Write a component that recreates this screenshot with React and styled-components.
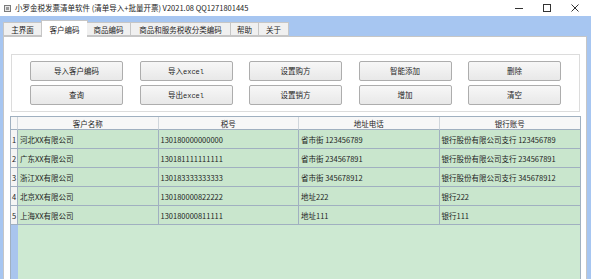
import React from 'react'
import styled, { createGlobalStyle } from 'styled-components'

const GlobalStyle = createGlobalStyle`
  html, body {
    margin: 0;
    padding: 0;
    width: 591px;
    height: 279px;
    overflow: hidden;
    background: #ffffff;
  }
  * { box-sizing: border-box; }
`

const Window = styled.div`
  width: 591px;
  height: 279px;
  display: flex;
  flex-direction: column;
  font-family: "Noto Sans CJK SC", "Noto Sans", sans-serif;
  color: #1e1e1e;
`

const TitleBar = styled.div`
  height: 16px;
  flex: none;
  display: flex;
  align-items: center;
  background: #ffffff;
  padding-left: 4px;
`

const AppIcon = styled.svg`
  width: 7px;
  height: 7px;
  margin-right: 4px;
`

const Title = styled.div`
  font-size: 7.5px;
  line-height: 16px;
  white-space: nowrap;
  color: #222;
`

const Controls = styled.div`
  margin-left: auto;
  margin-right: 2px;
  display: flex;
  align-items: center;
  height: 16px;
`

const Ctrl = styled.div`
  width: 28px;
  height: 16px;
  display: flex;
  align-items: center;
  justify-content: center;
`

const Frame = styled.div`
  flex: 1;
  min-height: 0;
  background: #a7c6f1;
  padding: 4px 4px 0 3px;
  display: flex;
  flex-direction: column;
`

const TabStrip = styled.div`
  height: 16px;
  flex: none;
  display: flex;
  align-items: flex-end;
  position: relative;
  z-index: 1;
`

const Tab = styled.div`
  width: ${p => p.$w}px;
  height: ${p => (p.$active ? 17 : 14)}px;
  margin-bottom: ${p => (p.$active ? -1 : 0)}px;
  margin-left: ${p => (p.$active ? -1 : 0)}px;
  margin-right: ${p => (p.$active ? -1 : 0)}px;
  background: ${p => (p.$active ? '#ffffff' : '#f0f0f0')};
  border: 1px solid #c6c6c6;
  border-bottom: ${p => (p.$active ? 'none' : '1px solid #c6c6c6')};
  border-left: ${p => (p.$first || p.$active ? '1px solid #c6c6c6' : 'none')};
  font-size: 7.5px;
  display: flex;
  align-items: center;
  justify-content: center;
  white-space: nowrap;
`

const Panel = styled.div`
  flex: 1;
  min-height: 0;
  background: #ffffff;
  border: 1px solid #c6c6c6;
  border-bottom: none;
  display: flex;
  flex-direction: column;
  padding: 0 5px 0 6px;
`

const GroupBox = styled.div`
  margin: 17px 1px 0 1px;
  border: 1px solid #dcdcdc;
  padding: 6px 0 6px 18px;
  display: grid;
  grid-template-columns: repeat(5, 93px);
  column-gap: 16.5px;
  row-gap: 4px;
`

const Button = styled.div`
  height: 20px;
  border: 1px solid #adadad;
  border-radius: 2px;
  background: linear-gradient(#f7f7f7, #e8e8e8);
  font-size: 7.5px;
  display: flex;
  align-items: center;
  justify-content: center;
  white-space: nowrap;
`

const Label = styled.span`
  line-height: 10px;
`

const Latin = styled.span`
  font-family: "Liberation Mono", monospace;
  font-size: 7px;
`

const Grid = styled.div`
  margin-top: 4px;
  flex: 1;
  min-height: 0;
  display: flex;
  flex-direction: column;
  border: 1px solid #a0b0c0;
  border-bottom: none;
  background: #cde9d2;
`

const Row = styled.div`
  display: grid;
  grid-template-columns: 7px repeat(4, 1fr);
  height: ${p => (p.$head ? 13 : 19)}px;
  flex: none;
`

const HeadCell = styled.div`
  background: #f7f7f7;
  border-right: 1px solid #d0d6dc;
  border-bottom: 1px solid #a0b0c0;
  font-size: 7.5px;
  display: flex;
  align-items: center;
  justify-content: center;
  white-space: nowrap;
  &:last-child { border-right: none; }
`

const NumCell = styled.div`
  background: #f4f4f4;
  border-right: 1px solid #a0b0c0;
  border-bottom: 1px solid #a0b0c0;
  font-size: 7.5px;
  display: flex;
  align-items: center;
  justify-content: center;
`

const Cell = styled.div`
  background: #c9e6cd;
  border-right: 1px solid #a0b0c0;
  border-bottom: 1px solid #a0b0c0;
  font-size: 7.5px;
  padding-left: 2px;
  display: flex;
  align-items: center;
  white-space: nowrap;
  overflow: hidden;
  &:last-child { border-right: none; }
`

const Filler = styled.div`
  flex: 1;
  display: grid;
  grid-template-columns: 7px 1fr;
`

const FillerHead = styled.div`
  background: #a9c5ee;
`

const tabs = [
  { label: '主界面', w: 39 },
  { label: '客户编码', w: 47, active: true },
  { label: '商品编码', w: 44 },
  { label: '商品和服务税收分类编码', w: 100 },
  { label: '帮助', w: 28 },
  { label: '关于', w: 30 },
]

const buttons = [
  '导入客户编码', ['导入', 'excel'], '设置购方', '智能添加', '删除',
  '查询', ['导出', 'excel'], '设置销方', '增加', '清空',
]

const columns = ['客户名称', '税号', '地址电话', '银行账号']

const rows = [
  ['河北XX有限公司', '130180000000000', '省市街 123456789', '银行股份有限公司支行 123456789'],
  ['广东XX有限公司', '130181111111111', '省市街 234567891', '银行股份有限公司支行 234567891'],
  ['浙江XX有限公司', '130183333333333', '省市街 345678912', '银行股份有限公司支行 345678912'],
  ['北京XX有限公司', '130180000822222', '地址222', '银行222'],
  ['上海XX有限公司', '130180000811111', '地址111', '银行111'],
]

export default function App() {
  return (
    <>
      <GlobalStyle />
      <Window>
        <TitleBar>
          <AppIcon viewBox="0 0 7 7">
            <rect x="0.5" y="0.5" width="6" height="6" fill="#e8e8e8" stroke="#7a7a7a" />
            <rect x="2" y="2" width="3" height="3" fill="#9a9a9a" />
          </AppIcon>
          <Title>小罗金税发票清单软件 (清单导入+批量开票) V2021.08 QQ1271801445</Title>
          <Controls>
            <Ctrl>
              <svg width="8" height="8" viewBox="0 0 8 8">
                <line x1="0" y1="4.5" x2="8" y2="4.5" stroke="#333" strokeWidth="1" />
              </svg>
            </Ctrl>
            <Ctrl>
              <svg width="8" height="8" viewBox="0 0 8 8">
                <rect x="0.5" y="0.5" width="7" height="7" fill="none" stroke="#333" strokeWidth="1" />
              </svg>
            </Ctrl>
            <Ctrl>
              <svg width="8" height="8" viewBox="0 0 8 8">
                <path d="M0.5 0.5 L7.5 7.5 M7.5 0.5 L0.5 7.5" stroke="#333" strokeWidth="1" />
              </svg>
            </Ctrl>
          </Controls>
        </TitleBar>
        <Frame>
          <TabStrip>
            {tabs.map((t, i) => (
              <Tab key={t.label} $w={t.w} $active={t.active} $first={i === 0}>{t.label}</Tab>
            ))}
          </TabStrip>
          <Panel>
            <GroupBox>
              {buttons.map((b, i) => (
                <Button key={i}>
                  <Label>
                    {Array.isArray(b) ? <>{b[0]}<Latin>{b[1]}</Latin></> : b}
                  </Label>
                </Button>
              ))}
            </GroupBox>
            <Grid>
              <Row $head>
                <HeadCell />
                {columns.map(c => <HeadCell key={c}>{c}</HeadCell>)}
              </Row>
              {rows.map((r, i) => (
                <Row key={i}>
                  <NumCell>{i + 1}</NumCell>
                  {r.map((v, j) => <Cell key={j}>{v}</Cell>)}
                </Row>
              ))}
              <Filler>
                <FillerHead />
                <div />
              </Filler>
            </Grid>
          </Panel>
        </Frame>
      </Window>
    </>
  )
}
